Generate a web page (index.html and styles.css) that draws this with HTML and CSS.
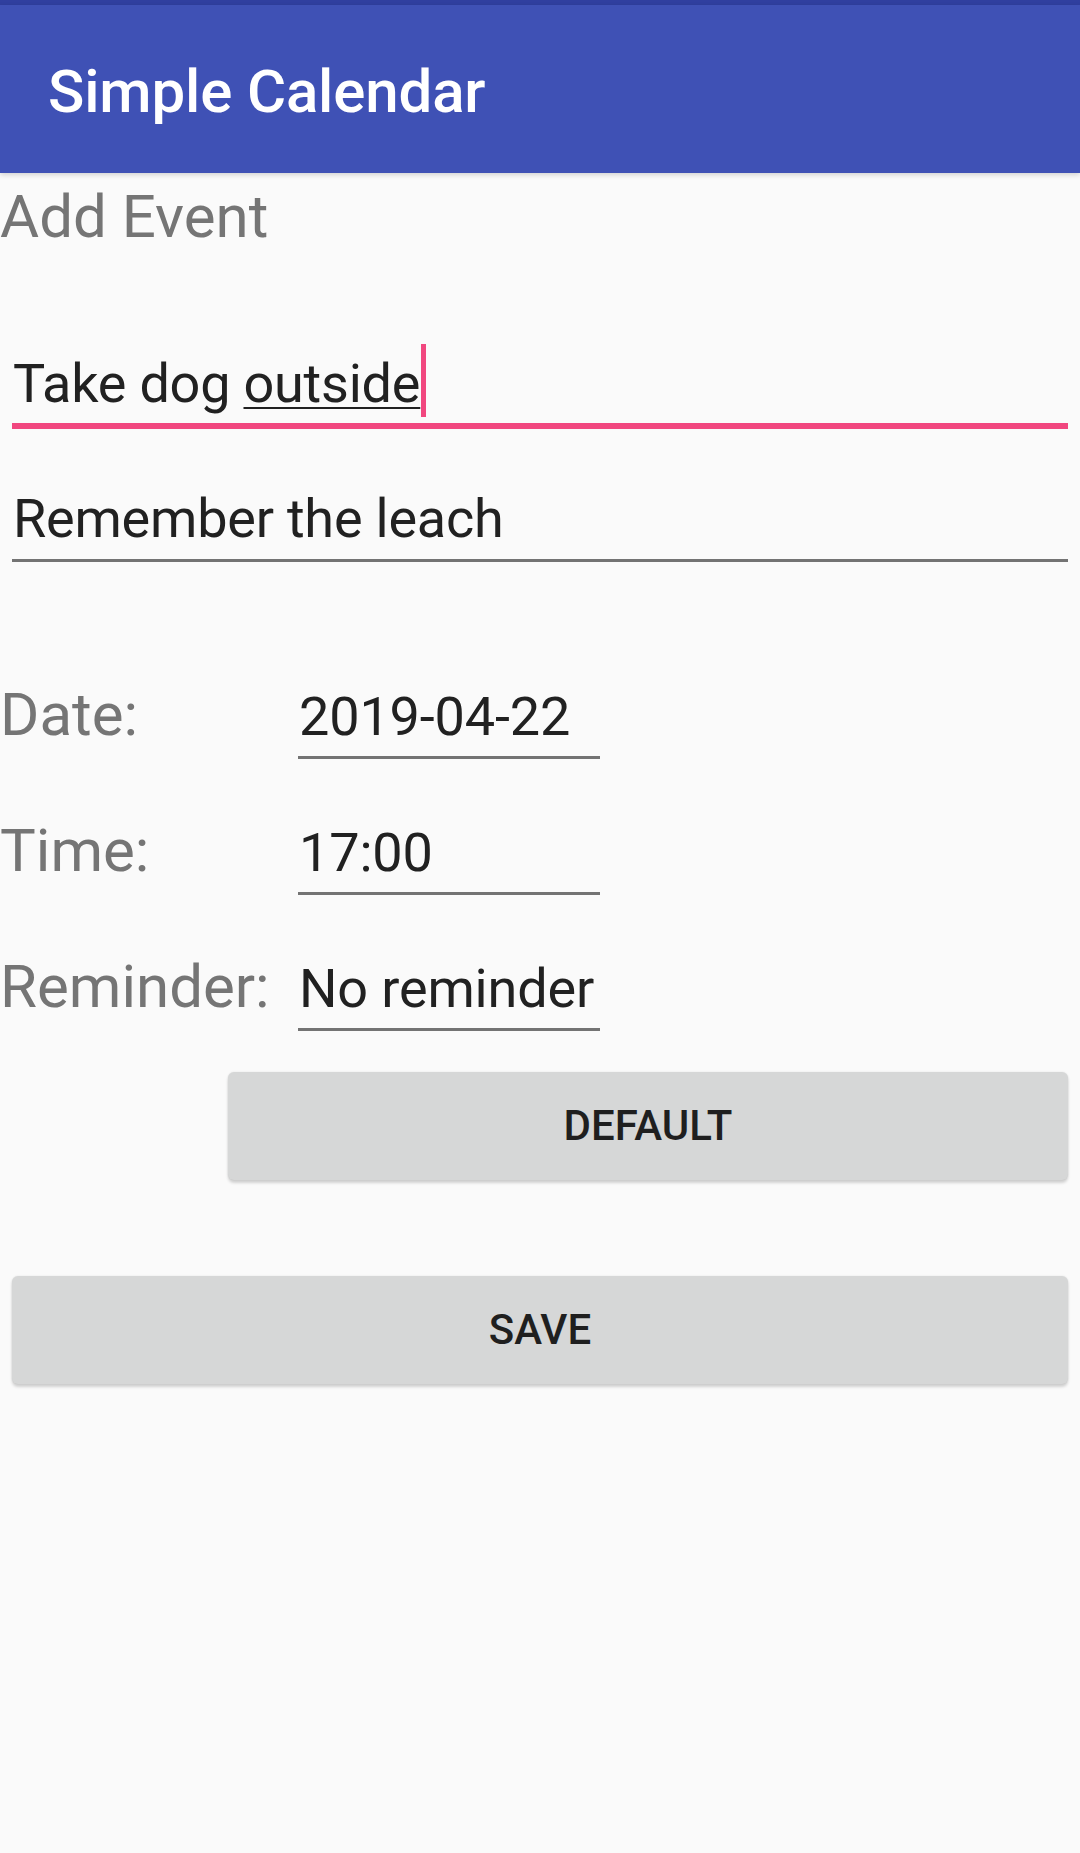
FILE: index.html
```html
<!DOCTYPE html>
<html lang="en">
<head>
<meta charset="utf-8">
<title>Simple Calendar</title>
<link rel="stylesheet" href="styles.css">
</head>
<body>
<div class="status"></div>
<header class="appbar"><h1 class="title">Simple Calendar</h1></header>
<main class="content">
  <h2 class="heading">Add Event</h2>
  <div class="field focused"><span class="typed">Take dog <span class="composing">outside</span><span class="cursor"></span></span></div>
  <div class="field normal">Remember the leach</div>
  <div class="row first"><span class="label">Date:</span><span class="value">2019-04-22</span></div>
  <div class="row"><span class="label">Time:</span><span class="value">17:00</span></div>
  <div class="row"><span class="label">Reminder:</span><span class="value">No reminder</span></div>
  <div class="btn-wrap default-wrap"><button class="btn" type="button">DEFAULT</button></div>
  <div class="btn-wrap save-wrap"><button class="btn" type="button">SAVE</button></div>
</main>
</body>
</html>
```
FILE: styles.css
```css
* { box-sizing: border-box; margin: 0; padding: 0; }
html, body { background: #fafafa; }
body {
  width: 1080px;
  min-height: 1853px;
  font-family: Roboto, "Noto Sans", "Liberation Sans", sans-serif;
  color: #212121;
}
.status { height: 5px; background: #303f9f; }
.appbar {
  height: 168px;
  padding: 5px 0 0 48px;
  background: #3f51b5;
  box-shadow: 0 2px 5px rgba(0, 0, 0, 0.16);
  position: relative;
  z-index: 1;
}
.title {
  font-size: 60px;
  font-weight: 500;
  line-height: 163px;
  letter-spacing: -0.15px;
  color: #ffffff;
}
.heading {
  margin-top: 4px;
  font-size: 60px;
  font-weight: 400;
  line-height: 80px;
  color: #757575;
}
.field {
  margin: 0 12px;
  padding-left: 1px;
  font-size: 54px;
  line-height: 64px;
  letter-spacing: -0.22px;
  color: #212121;
  white-space: nowrap;
}
.field.focused {
  margin-top: 94.5px;
  padding-bottom: 7.5px;
  border-bottom: 6px solid #f1477f;
}
.field.normal {
  margin-top: 57.5px;
  padding-bottom: 8.5px;
  border-bottom: 3px solid #737373;
}
.typed { position: relative; }
.composing {
  text-decoration: underline;
  text-decoration-thickness: 2px;
  text-underline-offset: 5px;
  text-decoration-color: #212121;
}
.cursor {
  position: absolute;
  right: -6px;
  top: -8px;
  width: 5px;
  height: 73px;
  background: #f1477f;
}
.row {
  display: flex;
  align-items: flex-start;
  margin-top: 61.5px;
}
.row.first { margin-top: 122.5px; }
.label {
  width: 286px;
  font-size: 60px;
  line-height: 60px;
  color: #757575;
}
.value {
  width: 302px;
  margin-left: 12px;
  padding-left: 1px;
  padding-bottom: 7.5px;
  font-size: 54px;
  line-height: 64px;
  letter-spacing: -0.15px;
  color: #212121;
  border-bottom: 3px solid #737373;
  white-space: nowrap;
}
.btn-wrap { padding: 0 12px; }
.default-wrap { margin-top: 41px; padding-left: 228px; }
.save-wrap { margin-top: 96px; }
.btn {
  display: block;
  width: 100%;
  height: 108px;
  border: none;
  border-radius: 6px;
  background: #d6d7d7;
  font-family: Roboto, "Noto Sans", "Liberation Sans", sans-serif;
  font-size: 42px;
  font-weight: 500;
  line-height: 108px;
  color: #1f1f1f;
  box-shadow: 0 3px 3px rgba(0, 0, 0, 0.16), 0 0 2px rgba(0, 0, 0, 0.1);
}
```
